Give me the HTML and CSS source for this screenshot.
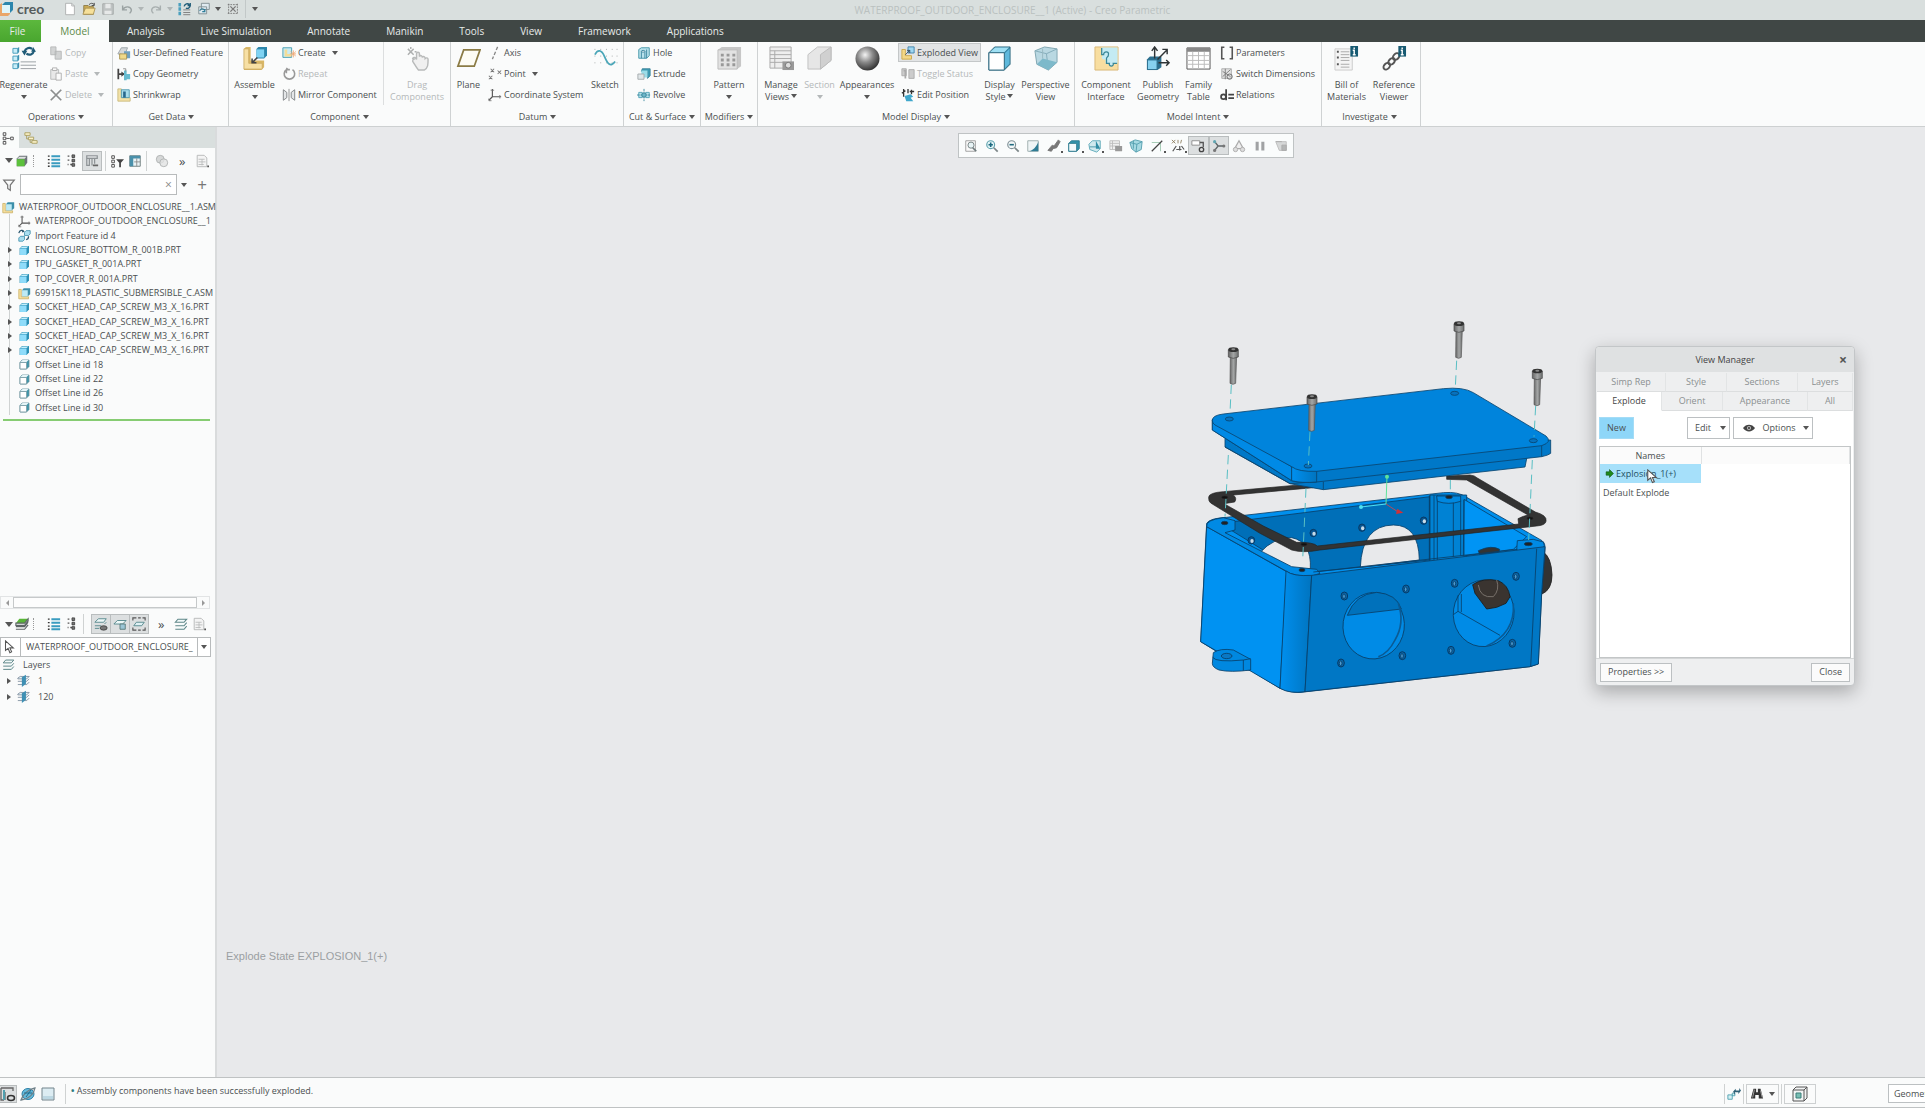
FILE: index.html
```html
<!DOCTYPE html>
<html lang="en">
<head>
<meta charset="utf-8">
<title>WATERPROOF_OUTDOOR_ENCLOSURE__1 (Active) - Creo Parametric</title>
<link rel="stylesheet" href="styles.css">
</head>
<body>
<svg class="sprite" aria-hidden="true">
  <defs>
    <radialGradient id="gSphere" cx=".4" cy=".35" r=".7"><stop offset="0" stop-color="#f4f4f4"/><stop offset=".45" stop-color="#8a8a8a"/><stop offset="1" stop-color="#2a2a2a"/></radialGradient>
  </defs>
  <symbol id="cube" viewBox="0 0 16 16"><path d="M2 5.500 5 2.500h8.500v8l-3 3H2z" fill="#2a8fb4"/><path d="M2.500 5.500h8v8h-8z" fill="#8fdcfa"/><path d="M3 5l2.500-2H13l-2.500 2z" fill="#c4effc"/></symbol>
  <symbol id="cubew" viewBox="0 0 16 16"><path d="M2.500 5.500l2.500-3h8.500v8l-3 3h-8z" fill="#3d97ac" stroke="#5f8f9b"/><path d="M2.500 5.500h8v8h-8z" fill="#fff" stroke="#7a9aa2"/><path d="M3 5l2.500-2.500H13L10.500 5z" fill="#e6f5f8"/></symbol>
  <symbol id="asm" viewBox="0 0 16 16"><path d="M1 3h3v9h9v2.500H1z" fill="#f6e0a0" stroke="#cbb064"/><path d="M5 4l2-2.500h8V9l-3 2.500H5z" fill="#3c8faa"/><path d="M5 4h7v7.500H5z" fill="#bdeaf5"/></symbol>
  <symbol id="csys" viewBox="0 0 16 16"><path d="M5 1v9h10M5 10l-4 4" fill="none" stroke="#555" stroke-width="1.300"/><path d="M3 2.500h4M13.500 8v4M1 12v2.500h3" stroke="#777" fill="none"/></symbol>
  <symbol id="imp" viewBox="0 0 16 16"><path d="M1 11l2-2h5v4l-2 2H1zM8 4l2-2h5v4l-2 2H8z" fill="#a9def0" stroke="#3d8fab"/><path d="M1 5c1-4 5-4 6-2l-2 .5M13 9c0 3-2 4-3 4" fill="none" stroke="#28546c" stroke-width="1.500"/></symbol>
  <symbol id="copy" viewBox="0 0 16 16"><path d="M2 1h6v9H2zM7 6h7v9H7z" fill="#d2d4d4" stroke="#b4b6b6"/></symbol>
  <symbol id="paste" viewBox="0 0 16 16"><path d="M2 3h9v11H2z" fill="#e8e8e8" stroke="#b4b6b6"/><path d="M4 1h5v3H4zM8 7h6v8H8z" fill="#fafafa" stroke="#aaa"/></symbol>
  <symbol id="del" viewBox="0 0 16 16"><path d="M2 2l12 12M14 2L2 14" stroke="#8c8e8e" stroke-width="2"/></symbol>
  <symbol id="udf" viewBox="0 0 16 16"><path d="M1 9l4-7h7l-3 8z" fill="#d4d8da" stroke="#98a0a4"/><path d="M8 6h7v8H8z" fill="#6fa0c0"/><path d="M3 9h8v6H3z" fill="#efd98a" stroke="#a89450"/></symbol>
  <symbol id="cgeo" viewBox="0 0 16 16"><path d="M1.500 2v12M1 8h7" stroke="#444" stroke-width="2"/><path d="M5 5l4 3-4 3z" fill="#444"/><path d="M8 4h3v4h4v6h-4v1H8z" fill="#67bcd0"/><path d="M7 2h3v3" fill="none" stroke="#888"/></symbol>
  <symbol id="shr" viewBox="0 0 16 16"><path d="M1 1h4v10h10v4H1z" fill="#f3e2a8" stroke="#c9b97a"/><path d="M5 2h9v9H5z" fill="#a8dcea" stroke="#4c98b0"/><path d="M7 4h3v7H7z" fill="#28688c"/></symbol>
  <symbol id="create" viewBox="0 0 16 16"><path d="M1 2h10v11H1z" fill="#c9ebf3" stroke="#3f9aae"/><path d="M3 4h3v5h5v3H3z" fill="#f2dd98"/><path d="M13 5v8M9 9h7M10 6l6 6M16 6l-6 6" stroke="#efaa78"/></symbol>
  <symbol id="repeat" viewBox="0 0 16 16"><path d="M5 3a6 6 0 1 0 7 0M5 3h4M5 3l1-2M5 3v4" fill="none" stroke="#999" stroke-width="1.800"/></symbol>
  <symbol id="mirror" viewBox="0 0 16 16"><path d="M1.500 2l4 3v6l-4 3zM14.500 2l-4 3v6l4 3z" fill="#e4e6e8" stroke="#7a7e80"/><path d="M8 1v14" stroke="#888"/></symbol>
  <symbol id="axis" viewBox="0 0 16 16"><path d="M11 1L5 15" stroke="#888" stroke-width="1.500" stroke-dasharray="4 2"/></symbol>
  <symbol id="point" viewBox="0 0 16 16"><path d="M3 2l4 4M7 2L3 6M11 4l4 4M15 4l-4 4M1 10l4 4M5 10l-4 4" stroke="#777" stroke-width="1.200"/></symbol>
  <symbol id="hole" viewBox="0 0 16 16"><path d="M2 4l3-2h9v9l-3 3H2z" fill="#b8e2ec" stroke="#3c91a6"/><path d="M5 6v8M9 6v8M11 4v10" stroke="#35809a"/><ellipse cx="7" cy="6" rx="2" ry="1" fill="#fff" stroke="#35809a"/></symbol>
  <symbol id="extr" viewBox="0 0 16 16"><path d="M6 2h9v8l-3 3V5H5z" fill="#3d9cb4" stroke="#3a8298"/><path d="M5 4h7v8H5z" fill="#9bdce8"/><path d="M1 8h7v6H1z" fill="#e0e6e8" stroke="#a2a8aa"/></symbol>
  <symbol id="rev" viewBox="0 0 16 16"><path d="M2 5h4v6H2zM10 5h4v6h-4z" fill="#b8e2ec" stroke="#4ba0b5"/><path d="M8 1v14M0 8h16" stroke="#37869a" stroke-dasharray="3 1"/><circle cx="8" cy="8" r="2.500" fill="#6fb7ca" stroke="#37869a"/></symbol>
  <symbol id="expl" viewBox="0 0 16 16"><path d="M1 4h4v7h7v4H1z" fill="#f4d888" stroke="#c9a648"/><path d="M8 1h7v7H8z" fill="#9fd8f2" stroke="#3b7fa8"/><path d="M5 10l5-5M7 5h3v3" stroke="#345" fill="none"/></symbol>
  <symbol id="togg" viewBox="0 0 16 16"><path d="M1 2h5v8H1zM9 3h6v10H9z" fill="#ccc" stroke="#aaa"/><path d="M3 4h2v9" fill="none" stroke="#aaa" stroke-width="2"/></symbol>
  <symbol id="edpos" viewBox="0 0 16 16"><path d="M1 6l4-3M3 1v9M8 1v5M12 2v5M10 4h5" stroke="#333" stroke-width="1.500"/><path d="M4 9l7-2 3 3-3 1 3 4H6z" fill="#3fa7cc"/></symbol>
  <symbol id="param" viewBox="0 0 16 16"><path d="M5 1.500H2v13h3M11 1.500h3v13h-3" fill="none" stroke="#555" stroke-width="1.800"/></symbol>
  <symbol id="swd" viewBox="0 0 16 16"><path d="M2 2h11v11H2z" fill="#e2e2e2" stroke="#aaa"/><path d="M3 5l9 6M3 11l9-8M6 2v12" stroke="#777"/><circle cx="11" cy="11" r="3" fill="none" stroke="#666"/></symbol>
  <symbol id="rel" viewBox="0 0 16 16"><circle cx="4" cy="10" r="2.800" fill="none" stroke="#444" stroke-width="2"/><path d="M7 1.500V14M9.500 7.500H16M9.500 11.500H16" stroke="#444" stroke-width="2"/></symbol>
  <!-- large ribbon icons -->
  <symbol id="Regen" viewBox="0 0 26 26"><path d="M2 2.500h5v5H2zM2 10.500h5v5H2zM2 18.500h5v5H2z" fill="#c7edf8" stroke="#4a9fbd"/><path d="M7 2l1.500-1v5L7 8M7 10l1.500-1v5L7 16M7 18l1.500-1v5L7 24" fill="#3b90b0"/><path d="M10 16.500h16M10 20h16M10 23.500h16" stroke="#9a9fa3"/><path d="M14 6c1-4 5-5 8-3M24 5c-1 4-5 5-8 3" fill="none" stroke="#205c78" stroke-width="2.200"/><path d="M11 5h6l-3 5zM21 6h5l-3-5z" fill="#205c78"/></symbol>
  <symbol id="Assem" viewBox="0 0 26 26"><path d="M2 3l2-2h5v14h14v7l-3 3H2z" fill="#d9b766"/><path d="M2 3h5v15h14v6H2z" fill="#f7e0a4" stroke="#c9a860" stroke-width=".8"/><path d="M15 3l2-2h9v9l-3 3h-8z" fill="#2c86ab"/><path d="M15 3.500h8V12h-8z" fill="#7fd3f3"/><path d="M11 17l5-5M10.500 13v4.500H15" fill="none" stroke="#444" stroke-width="1.600"/></symbol>
  <symbol id="Drag" viewBox="0 0 26 26"><path d="M3 3l6 6M9 3L3 9M6 1v2M12 6h-2" stroke="#aeb0b0" stroke-width="1.500"/><path d="M8 13c1-2 3-1 4 1V8c0-2 3-2 3 0v3c1-2 3-1 3 1 1-2 3-1 3 1 1-1 3-1 3 1 0 5 0 9-4 11h-6c-2-2-4-6-6-9 0-2 1-3 2-2z" fill="#f0f0f0" stroke="#b8baba" stroke-width="1.500"/></symbol>
  <symbol id="Plane" viewBox="0 0 26 26"><path d="M8 4h17l-6 17H2z" fill="#fdfcf4" stroke="#8b7b45" stroke-width="1.800"/></symbol>
  <symbol id="Sketch" viewBox="0 0 26 26"><path d="M2 3v21M8 3v21M14 3v21M20 3v21M25 3v21" stroke="#a8adad" stroke-dasharray="1 6"/><path d="M2 9c3-6 7-5 10 2s6 12 11 5" fill="none" stroke="#4aa6b8" stroke-width="1.800"/></symbol>
  <symbol id="Pattern" viewBox="0 0 26 26"><path d="M1 4l4-3h20v20l-4 3z" fill="#c7c7c7"/><path d="M1 4h20v20H1z" fill="#e2e2e2" stroke="#bbb"/><path d="M4 8h3v3H4zM10 8h3v3h-3zM16 8h3v3h-3zM4 13h3v3H4zM10 13h3v3h-3zM16 13h3v3h-3zM4 18h3v3H4zM10 18h3v3h-3zM16 18h3v3h-3z" fill="#999"/></symbol>
  <symbol id="Manage" viewBox="0 0 26 26"><path d="M1 1h22v22H1z" fill="#eee" stroke="#aaa"/><path d="M1 5h22M1 9h22M1 13h22M1 17h14M6 5v18" stroke="#aaa"/><path d="M14 16h12v9H14z" fill="#999"/><circle cx="20" cy="20" r="3" fill="#ddd" stroke="#777"/></symbol>
  <symbol id="Section" viewBox="0 0 26 26"><path d="M1 9L11 1h14v14L14 24H1z" fill="#e6e6e6" stroke="#c0c0c0"/><path d="M14 9v15L25 15V1z" fill="#d0d0d0" stroke="#bbb"/></symbol>
  <symbol id="Appear" viewBox="0 0 26 26"><circle cx="13" cy="13" r="12.500" fill="url(#gSphere)"/></symbol>
  <symbol id="Display" viewBox="0 0 26 26"><path d="M2 7l6-6h16v18l-6 6H2z" fill="#2f7f9c" stroke="#2f6a80"/><path d="M3 6.500L8.500 1.500H23l-5 5z" fill="#9fe0f4"/><path d="M18.500 7.500l5-5v16l-5 5z" fill="#5fb9dc"/><path d="M2 7h16v18H2z" fill="#fff" stroke="#2f6a80"/></symbol>
  <symbol id="Persp" viewBox="0 0 26 26"><path d="M2 5L12 1l13 2v14l-9 8L4 19z" fill="#b9d8e2" stroke="#7fa4b0"/><path d="M2 5l12 3 11-5M14 8l2 17" fill="none" stroke="#84adba"/><path d="M4 19l6-6 15 4-9 8z" fill="#7db9ca"/><path d="M10 13V3" stroke="#98b8c2"/></symbol>
  <symbol id="CompInt" viewBox="0 0 26 26"><path d="M1 1h24v24H1z" fill="#f8dea0" stroke="#d8b878"/><path d="M8 1.500h16.500V18h-5c1 4-5 4-4 0H12v-4c-5 1-5-5-1-5H8z" fill="#c4ebf3"/><path d="M8 2v7h2c0-4 6-4 5 0 0 3-2 2-2 4v5h3c-1 4 5 4 4 0h4" fill="none" stroke="#3a8796" stroke-width="1.300"/></symbol>
  <symbol id="PubGeo" viewBox="0 0 26 26"><path d="M1 14l3-3h12v11l-4 3H1z" fill="#2c6f8e"/><path d="M1.500 14.500h10v10h-10z" fill="#86d1ef" stroke="#2c6f8e"/><path d="M9 13V2M6 5l3-4 3 4M12 14L22 4M17 3.500h5v5M13 17.500h11M21 14.500l3 3-3 3" fill="none" stroke="#2f3436" stroke-width="1.500"/></symbol>
  <symbol id="Family" viewBox="0 0 26 26"><path d="M1 2h24v22H1z" fill="#fff" stroke="#555"/><path d="M1 2h24v4H1z" fill="#888"/><path d="M1 10h24M1 15h24M1 19h24M7 6v18M13 6v18M19 6v18" stroke="#bbb"/></symbol>
  <symbol id="Bill" viewBox="0 0 26 26"><path d="M1 3h18v22H1z" fill="#f4f4f4" stroke="#ccc"/><path d="M3 6h2M3 12h2M3 19h2" stroke="#555" stroke-width="2"/><path d="M7 6h9M7 9h9M7 12h9M7 15h9M7 19h9M7 22h9" stroke="#aaa"/><path d="M17 0h8v11h-8z" fill="#175a72"/><path d="M21 1.500v1.500M19.500 4.500H21V9M19.500 9h3" stroke="#fff" stroke-width="1.500" fill="none"/></symbol>
  <symbol id="RefV" viewBox="0 0 26 26"><g fill="none" stroke="#555" stroke-width="2"><ellipse cx="5" cy="21" rx="4" ry="2.800" transform="rotate(-45 5 21)"/><ellipse cx="10" cy="16" rx="4" ry="2.800" transform="rotate(-45 10 16)"/><ellipse cx="14.500" cy="11.500" rx="4" ry="2.800" transform="rotate(-45 14 11)"/></g><path d="M17 0h8v11h-8z" fill="#175a72"/><path d="M21 1.500v1.500M19.500 4.500H21V9M19.500 9h3" stroke="#fff" stroke-width="1.500" fill="none"/></symbol>
  <!-- quick access -->
  <symbol id="new" viewBox="0 0 16 16"><path d="M3 1.500h7l3 3v10H3z" fill="#fff" stroke="#a9adad"/><path d="M10 1.500v3h3" fill="none" stroke="#a9adad"/></symbol>
  <symbol id="open" viewBox="0 0 16 16"><path d="M2 4h5l1 1h5v9H2z" fill="#caa952" stroke="#8c7a48"/><path d="M1 14l3-7h11l-2 7z" fill="#f6e09a" stroke="#a99256"/><path d="M8 3c2-2 4-2 6 0M14 1v3h-3" fill="none" stroke="#444"/></symbol>
  <symbol id="save" viewBox="0 0 16 16"><path d="M2 2h12v12H2z" fill="#bfc3c3" stroke="#a3a7a7"/><path d="M5 2h6v5H5zM4 10h8v4H4z" fill="#e6e8e8"/></symbol>
  <symbol id="undo" viewBox="0 0 16 16"><path d="M3 4v5h5M3 9c3-5 9-4 10 0 0 2-1 3-2 4" fill="none" stroke="#9aa2a2" stroke-width="1.600"/></symbol>
  <symbol id="redo" viewBox="0 0 16 16"><path d="M13 4v5H8M13 9C10 4 4 5 3 9c0 2 1 3 2 4" fill="none" stroke="#a8afaf" stroke-width="1.600"/></symbol>
  <symbol id="regs" viewBox="0 0 16 16"><path d="M2 1v14" stroke="#4a9fbd" stroke-width="3" stroke-dasharray="4 1"/><path d="M6 9h8M6 12h8M6 14.500h8" stroke="#777"/><path d="M7 5c1-3 4-4 6-2M14 3c0 3-2 5-5 4M14 1v3h-3" fill="none" stroke="#205c78" stroke-width="1.600"/></symbol>
  <symbol id="wins" viewBox="0 0 16 16"><path d="M5 1.500h9v7H5zM2 5.500h9v8H2z" fill="#dfeaf0" stroke="#7d8b90"/><path d="M3 10c2-3 4-3 6 0M9 8v3H6" fill="none" stroke="#2f7d98" stroke-width="1.300"/></symbol>
  <symbol id="closew" viewBox="0 0 16 16"><path d="M2 3h12M2 13h12M3 2v12M13 2v12" stroke="#777" stroke-dasharray="2 1"/><path d="M5 5l6 6M11 5l-6 6" stroke="#777" stroke-width="1.500"/></symbol>
  <!-- trees -->
  <symbol id="tTree" viewBox="0 0 16 16"><path d="M2.500 2h3v3h-3zM2.500 7h3v3h-3zM2.500 12h3v3h-3zM11 7h3v3h-3z" fill="#fff" stroke="#444"/><path d="M6 8.500h4" stroke="#444"/></symbol>
  <symbol id="tFold" viewBox="0 0 16 16"><path d="M1 2h6v3H1zM5 7h6v3H5zM9 11h6v3H9z" fill="#fbf2c8" stroke="#a89c5c"/><path d="M3 5v4h2M7 10v3h2" fill="none" stroke="#a89c5c"/></symbol>
  <symbol id="gcube" viewBox="0 0 16 16"><path d="M2 5l3-3h9v8l-3 4H2z" fill="#6d7278"/><path d="M2 6h9v8H2z" fill="#5cc13c"/><path d="M2.500 5.500L5 3h8l-2 2.500z" fill="#dfe3e0"/></symbol>
  <symbol id="l1" viewBox="0 0 16 16"><path d="M1 2.500h2M1 6.500h2M1 10.500h2M1 14h2" stroke="#333" stroke-width="1.500"/><path d="M5 2.500h10M5 6.500h10M5 10.500h10M5 14h10" stroke="#3a9cc0" stroke-width="2.400"/></symbol>
  <symbol id="l2" viewBox="0 0 16 16"><path d="M3 2.500h2M3 7h2M6 12h2M3 12h1" stroke="#555" stroke-width="1.500"/><path d="M8 1h3v3H8zM8 6h3v3H8zM8 11h3v3H8z" fill="#777" stroke="#444"/></symbol>
  <symbol id="cols" viewBox="0 0 16 16"><path d="M2 2h12v3H2zM2 5v8h3V5M8 5v8M11 5v6" fill="none" stroke="#8e9396" stroke-width="1.400"/><path d="M9 13h6" stroke="#666" stroke-width="2"/></symbol>
  <symbol id="tfil" viewBox="0 0 16 16"><path d="M2 2h3v3H2zM2 7h3v3H2zM2 12h3v3H2z" fill="#fff" stroke="#444"/><path d="M7 6h9l-3.500 4v5h-2v-5z" fill="#444"/></symbol>
  <symbol id="tset" viewBox="0 0 16 16"><path d="M2 2h12v12H2z" fill="#e8f3f6" stroke="#677"/><path d="M2 2h12v3H2zM2 5h4v9H2z" fill="#4a90aa"/><path d="M10 5v9M7 9h7" stroke="#888"/></symbol>
  <symbol id="rings" viewBox="0 0 16 16"><circle cx="6" cy="6" r="4.500" fill="#d6d8d8" stroke="#aeb1b1"/><circle cx="10" cy="10" r="4.500" fill="#e2e4e4" fill-opacity=".8" stroke="#aeb1b1"/></symbol>
  <symbol id="sheet" viewBox="0 0 16 16"><path d="M2.500 1.500h8l3 3v10h-11z" fill="#f4f4f4" stroke="#b4b6b6"/><path d="M4 6h7M4 9h8M4 12h6M8 6v7" stroke="#b9bbbb"/><path d="M14 13h2v2h-2z" fill="#555"/></symbol>
  <symbol id="funnel" viewBox="0 0 16 16"><path d="M2 2.500h12L9.500 8v6l-3-2V8z" fill="none" stroke="#777" stroke-width="1.400"/></symbol>
  <symbol id="glay" viewBox="0 0 16 16"><path d="M1 7l4-5h10l-4 5z" fill="#58b536"/><path d="M1 7h10l4-5v2.500l-4 5H1zM1 11h10l4-5M1 14h10l4-5" fill="none" stroke="#5d6466" stroke-width="1.300"/></symbol>
  <symbol id="lay" viewBox="0 0 16 16"><path d="M1.500 6l3-3.500h10l-3 3.500zM1.500 10h10l3-3.500M1.500 14h10l3-3.500" fill="#f2fafa" stroke="#5d8688" stroke-width="1.200"/></symbol>
  <symbol id="layb" viewBox="0 0 16 16"><path d="M1 5l3-2h11l-3 3H1zM1 9h11l3-3M1 13h11l3-3" fill="#e5f3f6" stroke="#789"/><path d="M6 4l5-3v11l-5 4z" fill="#3f90b4"/></symbol>
  <symbol id="leye" viewBox="0 0 16 16"><path d="M1 6l4-4h9l-3 4zM1 10h7M1 13h5M12 8l2-2" fill="#eef8f8" stroke="#4f8488"/><ellipse cx="11" cy="12.500" rx="4" ry="2.500" fill="#777" stroke="#444"/></symbol>
  <symbol id="lcube" viewBox="0 0 16 16"><path d="M1 8l4-4h10l-4 4z" fill="#eef8f8" stroke="#4f8488"/><path d="M8 8h6v6H8z" fill="#9bc6d6" stroke="#577"/></symbol>
  <symbol id="lsel" viewBox="0 0 16 16"><path d="M1 4V1h4M7 1h3M12 1h3v3M1 12v3h4M7 15h3M12 15h3v-3" fill="none" stroke="#555" stroke-width="1.300"/><path d="M2 10l3-4h9l-3 4z" fill="#dff0f4" stroke="#4f8488"/></symbol>
  <symbol id="arrow" viewBox="0 0 16 16"><path d="M4 1v11l3-2.500 2 5 2-1-2-4.500h4z" fill="#fff" stroke="#555" stroke-width="1.200"/></symbol>
  <!-- graphics toolbar -->
  <symbol id="zfit" viewBox="0 0 16 16"><path d="M2 2h11v12H2z" fill="#fafafa" stroke="#999"/><circle cx="8" cy="7" r="3.500" fill="#e8f4f6" stroke="#6d7a7c"/><path d="M10 10l4 4" stroke="#6d7a7c" stroke-width="2"/></symbol>
  <symbol id="zin" viewBox="0 0 16 16"><circle cx="6.500" cy="6.500" r="4.500" fill="#e4f6f8" stroke="#5fa2ae" stroke-width="1.300"/><path d="M4 6.500h5M6.500 4v5" stroke="#1f6a80" stroke-width="1.800"/><path d="M10 10l4.500 4.500" stroke="#7c8688" stroke-width="2"/></symbol>
  <symbol id="zout" viewBox="0 0 16 16"><circle cx="6.500" cy="6.500" r="4.500" fill="#f2f6f6" stroke="#7f9096" stroke-width="1.300"/><path d="M4 6.500h5" stroke="#1f6a80" stroke-width="1.800"/><path d="M10 10l4.500 4.500" stroke="#7c8688" stroke-width="2"/></symbol>
  <symbol id="repaint" viewBox="0 0 16 16"><path d="M2 2h12v12H2z" fill="#eff5f6" stroke="#9aa"/><path d="M14 3v11H3c5-1 9-5 11-11z" fill="#2f7c94"/></symbol>
  <symbol id="brush" viewBox="0 0 16 16"><path d="M1 13l5-6 2 1 5-7 2 2-4 7-4 1-2 3z" fill="#777" stroke="#777"/></symbol>
  <symbol id="dsty" viewBox="0 0 16 16"><path d="M2 5l3-3h9v9l-3 3H2z" fill="#3494ac" stroke="#2d7a8e"/><path d="M2 5h9v9H2z" fill="#f5fbfc" stroke="#2d7a8e"/></symbol>
  <symbol id="orient" viewBox="0 0 16 16"><path d="M1 6l4-4h9v9l-4 4-8-3z" fill="#cfe9ee" stroke="#58a6b6"/><path d="M9 2l5 9H9z" fill="#2b8ba4"/><path d="M2 9h10" stroke="#3a8fa4"/></symbol>
  <symbol id="vman" viewBox="0 0 16 16"><path d="M1 2h11v10H1z" fill="#f0f0f0" stroke="#bbb"/><path d="M1 5h11M1 8h11M4 2v10" stroke="#bbb"/><path d="M7 8h8v6H7z" fill="#999"/></symbol>
  <symbol id="pgl" viewBox="0 0 16 16"><path d="M1 4l6-3 8 2-1 9-6 3-5-4z" fill="#a6d9e2" stroke="#4f9cac"/><path d="M1 4l8 2 6-3M9 6l-1 9M5 2l0 9" stroke="#4f9cac" fill="none"/></symbol>
  <symbol id="diag" viewBox="0 0 16 16"><path d="M2 4h10v10" fill="none" stroke="#9bc6ae"/><path d="M2 14L14 2" stroke="#444" stroke-width="1.500"/></symbol>
  <symbol id="datum" viewBox="0 0 16 16"><path d="M1 1l4 4M5 1L1 5M8 1v4M12 1l-1 4" stroke="#8a7a5a"/><path d="M2 14l4-6M6 12h6M10 8v5M12 8l3 4" stroke="#555" stroke-width="1.400"/></symbol>
  <symbol id="anno" viewBox="0 0 16 16"><path d="M1 2h9v5H1z" fill="#fff" stroke="#888"/><path d="M10 4h4v5" fill="none" stroke="#555" stroke-width="1.500"/><circle cx="12" cy="12" r="2.500" fill="#ddd" stroke="#444" stroke-width="1.500"/></symbol>
  <symbol id="spin" viewBox="0 0 16 16"><path d="M7 8l-4-5M7 8l-4 5M7 8h7" stroke="#5e6668" stroke-width="1.600"/><circle cx="3" cy="3" r="1.800" fill="#5fa4b0"/><circle cx="3" cy="13" r="1.800" fill="#777"/><circle cx="13.500" cy="8" r="1.800" fill="#777"/></symbol>
  <symbol id="simu" viewBox="0 0 16 16"><path d="M8 2l5 9H3z" fill="#eee" stroke="#aaa" stroke-width="1.400"/><circle cx="4" cy="12" r="2.500" fill="#ddd" stroke="#aaa"/><circle cx="12" cy="12" r="2.500" fill="#ddd" stroke="#aaa"/></symbol>
  <symbol id="pause" viewBox="0 0 16 16"><path d="M3 3h3.500v10H3zM9.500 3H13v10H9.500z" fill="#a0a2a4"/></symbol>
  <symbol id="stop" viewBox="0 0 16 16"><path d="M2 3h12v10H6z" fill="#d6d8d8" stroke="#bbb"/><path d="M2 3h7M9 7h5v6H9z" fill="#b4b6b6" stroke="#aaa"/></symbol>
  <!-- status bar -->
  <symbol id="sTree" viewBox="0 0 16 16"><path d="M1 2h12v3M1 2v12h3M5 6v8" fill="none" stroke="#666" stroke-width="1.300"/><path d="M4 4v10" stroke="#4f9fae" stroke-width="2"/><ellipse cx="11" cy="12" rx="3.500" ry="2.500" fill="none" stroke="#333" stroke-width="1.500"/></symbol>
  <symbol id="sWeb" viewBox="0 0 16 16"><ellipse cx="8" cy="8" rx="6" ry="5.500" fill="#65bbdc" stroke="#2d7fa5"/><path d="M1 14C3 8 9 3 15 2c-1 6-6 11-14 12z" fill="none" stroke="#6f8088" stroke-width="1.300"/><path d="M4 7h8M6 11l5-7" stroke="#1e6b8e"/></symbol>
  <symbol id="sWin" viewBox="0 0 16 16"><path d="M2 2h12v12H2z" fill="#dcecf2" stroke="#72848c"/><path d="M3 10h10v3H3z" fill="#bcd7e2"/></symbol>
  <symbol id="sReg" viewBox="0 0 16 16"><path d="M1 9h5v5H1zM6 7h3v3H6z" fill="#d4f0f4" stroke="#4a9fae"/><path d="M7 5l3-3v2h4V1l2 3-3 4V6H9v3z" fill="#2c6076"/></symbol>
  <symbol id="sFind" viewBox="0 0 16 16"><path d="M4 2h3v4h2V2h3l3 11h-5V9H6v4H1z" fill="#333"/><path d="M5 3L3 12M12 4l2 8" stroke="#aaa"/></symbol>
  <symbol id="sBox" viewBox="0 0 16 16"><path d="M1 4l3-3h11v11l-3 3H1z" fill="#f2f4f4" stroke="#555"/><path d="M1 4h11v11M12 4l3-3" fill="none" stroke="#555"/><path d="M4 7h5v5H4z" fill="#77bdb2" stroke="#3b7f78"/></symbol>
  <symbol id="eye" viewBox="0 0 16 16"><path d="M0 8c4-6 12-6 16 0-4 6-12 6-16 0z" fill="#444"/><circle cx="8" cy="8" r="2.800" fill="#bbb"/><circle cx="8" cy="8" r="1.300" fill="#333"/></symbol>
  <symbol id="go" viewBox="0 0 16 16"><path d="M2 5h6V1l7 7-7 7v-4H2z" fill="#1f8a1c" stroke="#0f4f10"/></symbol>
  <symbol id="logo" viewBox="0 0 16 16"><path d="M1 4l3-2v8h8v3l-2 2H1z" fill="#e9a66a"/><path d="M4 4l3-3h8v8l-3 3H4z" fill="#2c86ad"/><path d="M4 4h8v8H4z" fill="#dff5fb"/></symbol>
</svg>

<div class="app">
  <header class="title-bar">
    <div class="quick">
      <svg class="i16"><use href="#logo"/></svg><span class="brand">creo</span>
      <button aria-label="New"><svg class="i14"><use href="#new"/></svg></button>
      <button aria-label="Open"><svg class="i14"><use href="#open"/></svg></button>
      <button aria-label="Save"><svg class="i14"><use href="#save"/></svg></button>
      <button aria-label="Undo"><svg class="i14"><use href="#undo"/></svg><i class="dn pale"></i></button>
      <button aria-label="Redo"><svg class="i14"><use href="#redo"/></svg><i class="dn pale"></i></button>
      <button aria-label="Regenerate"><svg class="i14"><use href="#regs"/></svg></button>
      <button aria-label="Windows"><svg class="i14"><use href="#wins"/></svg><i class="dn"></i></button>
      <button aria-label="Close window"><svg class="i14"><use href="#closew"/></svg></button>
      <button class="more" aria-label="Customize toolbar"><i class="dn"></i></button>
    </div>
    <h1>WATERPROOF_OUTDOOR_ENCLOSURE__1 (Active) - Creo Parametric</h1>
  </header>

  <nav class="tabs">
    <button class="file">File</button><button class="on">Model</button><button>Analysis</button><button>Live Simulation</button><button>Annotate</button><button>Manikin</button><button>Tools</button><button>View</button><button>Framework</button><button>Applications</button>
  </nav>

  <div class="ribbon">
    <section class="group g-ops">
      <button class="big"><svg><use href="#Regen"/></svg>Regenerate<i class="dn"></i></button>
      <div class="stack">
        <button disabled><svg><use href="#copy"/></svg>Copy</button>
        <button disabled><svg><use href="#paste"/></svg>Paste<i class="dn"></i></button>
        <button disabled><svg><use href="#del"/></svg>Delete<i class="dn"></i></button>
      </div>
      <button class="name">Operations<i class="dn"></i></button>
    </section>
    <section class="group g-data">
      <div class="stack">
        <button><svg><use href="#udf"/></svg>User-Defined Feature</button>
        <button><svg><use href="#cgeo"/></svg>Copy Geometry</button>
        <button><svg><use href="#shr"/></svg>Shrinkwrap</button>
      </div>
      <button class="name">Get Data<i class="dn"></i></button>
    </section>
    <section class="group g-comp">
      <button class="big"><svg><use href="#Assem"/></svg>Assemble<i class="dn"></i></button>
      <div class="stack">
        <button><svg><use href="#create"/></svg>Create<i class="dn"></i></button>
        <button disabled><svg><use href="#repeat"/></svg>Repeat</button>
        <button><svg><use href="#mirror"/></svg>Mirror Component</button>
      </div>
      <button class="big split" disabled><svg><use href="#Drag"/></svg>Drag<br>Components</button>
      <button class="name">Component<i class="dn"></i></button>
    </section>
    <section class="group g-datum">
      <button class="big"><svg><use href="#Plane"/></svg>Plane</button>
      <div class="stack">
        <button><svg><use href="#axis"/></svg>Axis</button>
        <button><svg><use href="#point"/></svg>Point<i class="dn"></i></button>
        <button><svg><use href="#csys"/></svg>Coordinate System</button>
      </div>
      <button class="big"><svg><use href="#Sketch"/></svg>Sketch</button>
      <button class="name">Datum<i class="dn"></i></button>
    </section>
    <section class="group g-cut">
      <div class="stack">
        <button><svg><use href="#hole"/></svg>Hole</button>
        <button><svg><use href="#extr"/></svg>Extrude</button>
        <button><svg><use href="#rev"/></svg>Revolve</button>
      </div>
      <button class="name">Cut &amp; Surface<i class="dn"></i></button>
    </section>
    <section class="group g-mod">
      <button class="big"><svg><use href="#Pattern"/></svg>Pattern<i class="dn"></i></button>
      <button class="name">Modifiers<i class="dn"></i></button>
    </section>
    <section class="group g-disp">
      <button class="big"><svg><use href="#Manage"/></svg>Manage<span>Views<i class="dn"></i></span></button>
      <button class="big" disabled><svg><use href="#Section"/></svg>Section<i class="dn"></i></button>
      <button class="big"><svg><use href="#Appear"/></svg>Appearances<i class="dn"></i></button>
      <div class="stack">
        <button class="pressed"><svg><use href="#expl"/></svg>Exploded View</button>
        <button disabled><svg><use href="#togg"/></svg>Toggle Status</button>
        <button><svg><use href="#edpos"/></svg>Edit Position</button>
      </div>
      <button class="big"><svg><use href="#Display"/></svg>Display<span>Style<i class="dn"></i></span></button>
      <button class="big"><svg><use href="#Persp"/></svg>Perspective<br>View</button>
      <button class="name">Model Display<i class="dn"></i></button>
    </section>
    <section class="group g-intent">
      <button class="big"><svg><use href="#CompInt"/></svg>Component<br>Interface</button>
      <button class="big"><svg><use href="#PubGeo"/></svg>Publish<br>Geometry</button>
      <button class="big"><svg><use href="#Family"/></svg>Family<br>Table</button>
      <div class="stack">
        <button><svg><use href="#param"/></svg>Parameters</button>
        <button><svg><use href="#swd"/></svg>Switch Dimensions</button>
        <button><svg><use href="#rel"/></svg>Relations</button>
      </div>
      <button class="name">Model Intent<i class="dn"></i></button>
    </section>
    <section class="group g-inv">
      <button class="big"><svg><use href="#Bill"/></svg>Bill of<br>Materials</button>
      <button class="big"><svg><use href="#RefV"/></svg>Reference<br>Viewer</button>
      <button class="name">Investigate<i class="dn"></i></button>
    </section>
  </div>

  <main class="work">
    <aside class="side">
      <section class="pane">
        <div class="side-tabs">
          <button class="on" aria-label="Model tree"><svg class="i14"><use href="#tTree"/></svg></button>
          <button aria-label="Folder browser"><svg class="i14"><use href="#tFold"/></svg></button>
        </div>
        <div class="tools">
          <i class="dn big-dn"></i>
          <button aria-label="Model"><svg class="i14"><use href="#gcube"/></svg></button>
          <b class="grip"></b>
          <button aria-label="Expand"><svg class="i14"><use href="#l1"/></svg></button>
          <button aria-label="Collapse"><svg class="i14"><use href="#l2"/></svg></button>
          <button class="pressed" aria-label="Columns"><svg class="i14"><use href="#cols"/></svg></button>
          <b class="sep"></b>
          <button aria-label="Tree filters"><svg class="i14"><use href="#tfil"/></svg></button>
          <button aria-label="Tree columns"><svg class="i14"><use href="#tset"/></svg></button>
          <b class="sep"></b>
          <button class="spaced" aria-label="Groups"><svg class="i14"><use href="#rings"/></svg></button>
          <button class="chev">»</button>
          <button aria-label="Settings"><svg class="i14"><use href="#sheet"/></svg></button>
        </div>
        <div class="search">
          <svg class="i14"><use href="#funnel"/></svg>
          <div class="field"><input type="text" aria-label="Search tree"><button aria-label="Clear">×</button></div>
          <i class="dn"></i><button class="plus" aria-label="Add">+</button>
        </div>
        <ul class="tree">
          <li class="root"><svg><use href="#asm"/></svg>WATERPROOF_OUTDOOR_ENCLOSURE__1.ASM</li>
          <li><svg><use href="#csys"/></svg>WATERPROOF_OUTDOOR_ENCLOSURE__1</li>
          <li><svg><use href="#imp"/></svg>Import Feature id 4</li>
          <li class="kids"><svg><use href="#cube"/></svg>ENCLOSURE_BOTTOM_R_001B.PRT</li>
          <li class="kids"><svg><use href="#cube"/></svg>TPU_GASKET_R_001A.PRT</li>
          <li class="kids"><svg><use href="#cube"/></svg>TOP_COVER_R_001A.PRT</li>
          <li class="kids"><svg><use href="#asm"/></svg>69915K118_PLASTIC_SUBMERSIBLE_C.ASM</li>
          <li class="kids"><svg><use href="#cube"/></svg>SOCKET_HEAD_CAP_SCREW_M3_X_16.PRT</li>
          <li class="kids"><svg><use href="#cube"/></svg>SOCKET_HEAD_CAP_SCREW_M3_X_16.PRT</li>
          <li class="kids"><svg><use href="#cube"/></svg>SOCKET_HEAD_CAP_SCREW_M3_X_16.PRT</li>
          <li class="kids"><svg><use href="#cube"/></svg>SOCKET_HEAD_CAP_SCREW_M3_X_16.PRT</li>
          <li><svg><use href="#cubew"/></svg>Offset Line id 18</li>
          <li><svg><use href="#cubew"/></svg>Offset Line id 22</li>
          <li><svg><use href="#cubew"/></svg>Offset Line id 26</li>
          <li><svg><use href="#cubew"/></svg>Offset Line id 30</li>
        </ul>
        <div class="insert-line"></div>
        <div class="hscroll"><button aria-label="Scroll left"><i class="lt"></i></button><div class="thumb"></div><button aria-label="Scroll right"><i class="rt"></i></button></div>
      </section>
      <section class="pane">
        <div class="tools">
          <i class="dn big-dn"></i>
          <button aria-label="Layers"><svg class="i14"><use href="#glay"/></svg></button>
          <b class="grip"></b>
          <button aria-label="Expand"><svg class="i14"><use href="#l1"/></svg></button>
          <button aria-label="Collapse"><svg class="i14"><use href="#l2"/></svg></button>
          <b class="sep"></b>
          <div class="joined spaced">
            <button class="pressed" aria-label="Show layers"><svg class="i14"><use href="#leye"/></svg></button><button class="pressed" aria-label="Show items"><svg class="i14"><use href="#lcube"/></svg></button><button class="pressed" aria-label="Select layers"><svg class="i14"><use href="#lsel"/></svg></button>
          </div>
          <button class="chev">»</button>
          <button aria-label="Layer menu"><svg class="i14"><use href="#lay"/></svg></button>
          <button aria-label="Settings"><svg class="i14"><use href="#sheet"/></svg></button>
        </div>
        <div class="picker">
          <button aria-label="Select model"><svg class="i14"><use href="#arrow"/></svg></button>
          <select aria-label="Active model"><option>WATERPROOF_OUTDOOR_ENCLOSURE_</option></select>
          <i class="dn"></i>
        </div>
        <ul class="layers">
          <li class="root"><svg><use href="#lay"/></svg>Layers</li>
          <li class="kids"><svg><use href="#layb"/></svg>1</li>
          <li class="kids"><svg><use href="#layb"/></svg>120</li>
        </ul>
      </section>
    </aside>

    <section class="view">
      <div class="view-tools">
        <button aria-label="Refit"><svg><use href="#zfit"/></svg></button>
        <button aria-label="Zoom in"><svg><use href="#zin"/></svg></button>
        <button aria-label="Zoom out"><svg><use href="#zout"/></svg></button>
        <button aria-label="Repaint"><svg><use href="#repaint"/></svg></button>
        <button class="menu" aria-label="Rendering"><svg><use href="#brush"/></svg></button>
        <button class="menu" aria-label="Display style"><svg><use href="#dsty"/></svg></button>
        <button class="menu" aria-label="Saved orientations"><svg><use href="#orient"/></svg></button>
        <button aria-label="View manager"><svg><use href="#vman"/></svg></button>
        <button aria-label="Perspective"><svg><use href="#pgl"/></svg></button>
        <button class="menu" aria-label="Section display"><svg><use href="#diag"/></svg></button>
        <button class="menu" aria-label="Datum display"><svg><use href="#datum"/></svg></button>
        <button class="pressed" aria-label="Annotation display"><svg><use href="#anno"/></svg></button>
        <button class="pressed" aria-label="Spin center"><svg><use href="#spin"/></svg></button>
        <button aria-label="Simulate"><svg><use href="#simu"/></svg></button>
        <button aria-label="Pause"><svg><use href="#pause"/></svg></button>
        <button aria-label="Stop"><svg><use href="#stop"/></svg></button>
      </div>

      <svg class="model" viewBox="0 0 1170 1230" role="img" aria-label="Exploded enclosure assembly">
        <defs>
          <linearGradient id="corner"><stop offset="0" stop-color="#0090f0"/><stop offset="1" stop-color="#0074bf"/></linearGradient>
          <linearGradient id="shank"><stop offset="0" stop-color="#666"/><stop offset=".5" stop-color="#a4a6a6"/><stop offset="1" stop-color="#6d6f6f"/></linearGradient>
          <g id="screw"><path d="M-9 22h19l-3 84q-8 6-17 0z" fill="url(#shank)" stroke="#555" stroke-width="2"/><path d="M-15 5v22q14 8 30 0V5z" fill="url(#shank)" stroke="#444" stroke-width="2"/><ellipse cy="5" rx="15" ry="7" fill="#333"/><ellipse cy="4" rx="6" ry="3" fill="#888"/></g>
          <g id="bore"><ellipse rx="10" ry="12" fill="#0a66a8" stroke="#063a66" stroke-width="3"/><ellipse cx="-1" cy="1" rx="4" ry="7" fill="#4c9ad0"/></g>
          <g id="thru"><ellipse rx="10" ry="11" fill="#0a5590" stroke="#063a66" stroke-width="3"/><ellipse cx="2" cy="2" rx="5" ry="6" fill="#c9dbe8" stroke="none"/></g>
        </defs>
        <g transform="translate(0 510)" stroke="#093f68" stroke-width="2.500" stroke-linejoin="round">
          <path d="M1088 245q26 15 28 70 0 45-32 58z" fill="#333" stroke="#222"/>
          <path d="M80 160Q88 145 140 142L790 68Q835 64 860 82L1086 212Q1097 220 1095 240L1085 370 1075 582 1050 590 380 665Q340 673 300 655L210 600H200L62 515z" fill="#0090ee"/>
          <path d="M120 160L750 80V270L400 306 330 290z" fill="#006fb8"/>
          <path d="M750 75h110v190l-110 16z" fill="#0082d4"/>
          <path d="M852 88L1040 200 1000 238 850 258z" fill="#0094f4"/>
          <path d="M762 76v204M772 76v204M820 95v165M842 92v165M852 90v165M748 76v205" fill="none"/>
          <path d="M770 78h72v16q-36 12-70 0z" fill="#0088e0"/>
          <path d="M241 247Q280 203 335 203 395 215 391 296L322 300z" fill="#e8e9eb"/>
          <path d="M541 292Q546 166 640 165 716 165 718 270z" fill="#e8e9eb"/>
          <path d="M895 242q40-18 64-4l-2 8-58 8z" fill="#333"/>
          <use href="#thru" x="214" y="211"/><use href="#thru" x="400" y="189"/><use href="#thru" x="546" y="173"/><use href="#thru" x="731" y="152"/>
          <path d="M80 170L62 515 300 655 320 305z" fill="#0092f2"/>
          <path d="M80 170Q76 150 130 143L165 152V180L135 188 335 290 410 298 420 310 395 318Q340 320 318 303z" fill="#008ae4"/>
          <path d="M1012 212l48-4 30 8q6 10 0 20l-80 6z" fill="#008ae4"/>
          <path d="M318 303Q340 320 395 316L375 665Q330 672 300 655z" fill="url(#corner)"/>
          <path d="M395 316L1095 230 1085 370 1075 582 1050 590 375 665z" fill="#0077c5"/>
          <path d="M1070 236L1052 590M400 306L1012 238" fill="none"/>
          <path d="M100 548q20-14 60-8l52 28v32q-60 8-95 0-20-8-20-20z" fill="#0088e0"/>
          <path d="M98 562q10 16 92 8l22-4" fill="none"/><ellipse cx="140" cy="558" rx="16" ry="8" fill="#0a78c4"/><path d="M190 570v32"/>
          <ellipse cx="581" cy="467" rx="92" ry="100" fill="#008be6" transform="rotate(8 581 467)"/>
          <path d="M502 436Q525 372 590 367 650 372 664 417z" fill="#0071bb"/>
          <path d="M655 400q20 60-10 110-20 40-50 50" fill="none" stroke="#0a5a94" stroke-width="5"/>
          <ellipse cx="911" cy="430" rx="91" ry="100" fill="#008be6" transform="rotate(8 911 430)"/>
          <path d="M834 376v48l126 72M834 424l-14 10M844 372v54" fill="none"/>
          <path d="M878 344Q910 322 955 332 985 345 990 380L978 400 950 412 920 417 885 370z" fill="#3a3430" stroke="#1c1a18"/>
          <path d="M895 345q5 40 45 35 20-20 10-50" fill="none" stroke="#77706a" stroke-width="3"/>
          <path d="M1000 400q6 90-80 128" fill="none" stroke="#0a5a94" stroke-width="5"/>
          <use href="#bore" x="493" y="378"/><use href="#bore" x="678" y="357"/><use href="#bore" x="483" y="579"/><use href="#bore" x="667" y="557"/><use href="#bore" x="824" y="340"/><use href="#bore" x="1008" y="319"/><use href="#bore" x="813" y="541"/><use href="#bore" x="997" y="520"/>
          <ellipse cx="134" cy="159" rx="10" ry="5" fill="#222"/><ellipse cx="366" cy="300" rx="9" ry="5" fill="#222"/><ellipse cx="807" cy="81" rx="10" ry="5" fill="#222"/><ellipse cx="1045" cy="222" rx="12" ry="5" fill="#222"/>
        </g>
        <g fill="#333" stroke="#222" stroke-width="2" stroke-linejoin="round">
          <path d="M86 592Q86 578 130 575L400 551V563L160 585Q172 594 164 606L132 611 250 678 350 727Q400 726 412 738L1016 672 1014 656Q1030 648 1044 645L860 540 800 538V528L870 525Q884 526 892 534L1066 636Q1102 646 1098 664 1096 676 1070 678L420 750Q370 760 335 750L240 700 92 609Q85 604 86 592z"/>
          <ellipse cx="134" cy="592" rx="9" ry="4" fill="#111"/><ellipse cx="372" cy="733" rx="9" ry="4" fill="#111"/><ellipse cx="1050" cy="655" rx="9" ry="4" fill="#111"/>
        </g>
        <g stroke="#0a446f" stroke-width="2.500" stroke-linejoin="round">
          <path d="M135 415v26l195 110 100 18 605-68 6-30z" fill="#0078c8"/>
          <path d="M135 441l195 110 80-6M430 545v24" fill="none"/>
          <path d="M97 358L97 390 335 542Q350 548 410 546L1085 470Q1105 466 1112 460V420L600 440z" fill="#0078c8"/>
          <path d="M97 360V390L335 542V500z" fill="#008ae6"/>
          <path d="M335 500v42q30 8 75 4v-34z" fill="url(#corner)"/>
          <path d="M97 362Q96 346 130 342L790 266Q850 260 880 278L1098 408Q1118 426 1085 437L410 514Q355 516 335 500L105 375Q97 370 97 362z" fill="#0084dc"/>
          <path d="M1085 437v33" fill="none"/>
          <g fill="#0672be"><ellipse cx="148" cy="357" rx="12" ry="6"/><ellipse cx="824" cy="280" rx="12" ry="6"/><ellipse cx="1060" cy="422" rx="12" ry="6"/><ellipse cx="384" cy="498" rx="12" ry="6"/></g>
        </g>
        <g fill="none" stroke="#58bfc4" stroke-width="3" stroke-dasharray="28 16">
          <path d="M154 254L150 338M145 465L135 650M390 395L385 495M378 565L368 780M830 182L826 262M811 540V575M1067 318L1062 410M1057 480L1046 720"/>
        </g>
        <use href="#screw" x="160" y="144"/><use href="#screw" x="396" y="285"/><use href="#screw" x="837" y="66"/><use href="#screw" x="1072" y="208"/>
        <g stroke-width="3" fill="none"><path d="M621 530L618 612" stroke="#5fe39a"/><path d="M618 612L543 621" stroke="#4fe0f0"/><path d="M618 612L656 637" stroke="#b84a5a"/></g>
        <circle cx="621" cy="530" r="6" fill="#5fe39a"/><circle cx="543" cy="621" r="6" fill="#4fe0f0"/><path d="M648 642l4-16 18 12z" fill="#d03038"/>
      </svg>

      <p class="state">Explode State EXPLOSION_1(+)</p>

      <section class="dialog" role="dialog" aria-labelledby="vm">
        <header><h2 id="vm">View Manager</h2><button aria-label="Close dialog">×</button></header>
        <div class="dlg-tabs r1"><button>Simp Rep</button><button>Style</button><button>Sections</button><button>Layers</button></div>
        <div class="dlg-tabs r2"><button class="on">Explode</button><button>Orient</button><button>Appearance</button><button>All</button></div>
        <div class="dlg-body">
          <div class="dlg-actions">
            <button class="new">New</button>
            <button class="edit">Edit<i class="dn"></i></button>
            <button class="opts"><svg><use href="#eye"/></svg>Options<i class="dn"></i></button>
          </div>
          <div class="list">
            <table>
              <thead><tr><th>Names</th><th></th></tr></thead>
              <tbody>
                <tr class="sel"><td><svg><use href="#go"/></svg>Explosion_1(+)</td><td></td></tr>
                <tr><td>Default Explode</td><td></td></tr>
              </tbody>
            </table>
            <svg class="cursor" viewBox="0 0 16 16"><use href="#arrow"/></svg>
          </div>
        </div>
        <footer><button>Properties &gt;&gt;</button><button>Close</button></footer>
      </section>
    </section>
  </main>

  <footer class="status">
    <button class="pressed" aria-label="Toggle tree"><svg class="i16"><use href="#sTree"/></svg></button>
    <button aria-label="Toggle browser"><svg class="i16"><use href="#sWeb"/></svg></button>
    <button aria-label="Full screen"><svg class="i16"><use href="#sWin"/></svg></button>
    <b class="sep"></b>
    <p><b>•</b> Assembly components have been successfully exploded.</p>
    <div class="right">
      <b class="sep"></b>
      <button aria-label="Regeneration status"><svg class="i14"><use href="#sReg"/></svg></button>
      <b class="sep"></b>
      <button class="boxed find" aria-label="Find"><svg class="i14"><use href="#sFind"/></svg><i class="dn"></i></button>
      <b class="sep"></b>
      <button class="boxed sel3d" aria-label="3D selection"><svg class="i16"><use href="#sBox"/></svg></button>
      <div class="filter"><select aria-label="Selection filter"><option>Geometry</option></select></div>
    </div>
  </footer>
</div>
</body>
</html>
```
FILE: styles.css
```css
* { box-sizing: border-box; }
html, body { height: 100%; }
body { margin: 0; font: 9px/12px "Open Sans", "Noto Sans", sans-serif; color: #4a4f50; overflow: hidden; background: #fafbfb; }
button, input, select { font: inherit; color: inherit; border: 0; padding: 0; margin: 0; background: none; }
h1, h2, p, ul { margin: 0; padding: 0; font-weight: 400; }
ul { list-style: none; }
svg { flex: none; display: block; }
.sprite { position: absolute; width: 0; height: 0; }
.i14 { width: 14px; height: 14px; }
.i16 { width: 16px; height: 16px; }
.dn { display: inline-block; flex: none; border: 3px solid transparent; border-top: 4px solid #555; border-bottom: 0; }
.dn.pale { border-top-color: #b0b6b6; }
.sep { width: 1px; height: 20px; background: #cfd2d2; }

.app { height: 100vh; display: flex; flex-direction: column; }

/* title bar */
.title-bar { height: 20px; display: grid; grid-template-columns: 300px 1fr 200px; align-items: center; background: #d9dfde; }
.title-bar h1 { font-size: 10px; text-align: center; color: #bac1c0; white-space: nowrap; }
.quick { display: flex; align-items: center; gap: 5px; height: 18px; align-self: start; }
.quick button { display: flex; align-items: center; gap: 4px; height: 18px; }
.quick > svg { margin-left: -2px; }
.brand { font: 700 14px/16px Lato, sans-serif; color: #555c5c; width: 41px; margin-left: -2px; }
.quick .more { border-left: 1px solid #c2c8c8; padding-left: 6px; }

/* ribbon tabs */
.tabs { height: 22px; display: flex; background: #404745; }
.tabs button { font-size: 10px; color: #e8ebea; padding: 0 18px; }
.tabs .file { width: 41px; padding: 0 6px 0 0; background: linear-gradient(#5cb83d, #49a62f); }
.tabs .on { width: 68px; padding: 0; color: #5a8a48; background: #fafcfb; }

/* ribbon */
.ribbon { height: 85px; display: flex; background: #fafbfb; border-bottom: 1px solid #cdd0d1; }
.group { display: grid; grid-template-rows: 63px 21px; border-right: 1px solid #cfd2d3; flex: none; }
.g-ops { grid-template-columns: 47px 65px; width: 113px; }
.g-data { grid-template-columns: 1fr; width: 116px; padding-left: 2px; }
.g-comp { grid-template-columns: 51px 103px 67px; width: 222px; }
.g-datum { grid-template-columns: 35px 100px 38px; width: 173px; }
.g-cut { grid-template-columns: 1fr; width: 77px; }
.g-cut .stack { padding-left: 11px; }
.g-mod { grid-template-columns: 1fr; width: 57px; }
.g-disp { grid-template-columns: 46px 31px 64px 83px 35px 57px; width: 317px; }
.g-intent { grid-template-columns: 62px 42px 39px 103px; width: 247px; }
.g-inv { grid-template-columns: 49px 46px; width: 99px; }
.big { display: flex; flex-direction: column; align-items: center; line-height: 12px; padding-top: 4px; white-space: nowrap; min-width: 0; text-align: center; }
.big svg { width: 25px; height: 25px; margin-bottom: 8px; }
.big > .dn { margin-top: 4px; }
.big span .dn { margin: 0 0 2px 2px; }
.big.split { border-left: 1px solid #dcdedf; }
.stack { display: flex; flex-direction: column; align-items: flex-start; }
.stack button { height: 21px; display: flex; align-items: center; gap: 2px; padding: 0 2px; white-space: nowrap; }
.stack svg { width: 14px; height: 14px; }
.stack .dn { margin-left: 4px; }
.stack .pressed { height: 17px; margin: 2px 0; outline: 1px solid #c4c7c8; background: #e2e4e5; }
.ribbon button:disabled { color: #b4b8b9; }
.ribbon button:disabled .dn { border-top-color: #b4b8b9; }
.name { grid-column: 1 / -1; grid-row: 2; display: flex; justify-content: center; align-items: center; gap: 3px; white-space: nowrap; padding-top: 3px; }

/* work area */
.work { flex: 1; min-height: 0; display: grid; grid-template-columns: 217px 1fr; background: #e8e9eb; }
.side { display: grid; grid-template-rows: 51fr 49fr; border-right: 2px solid #d9dbdc; background: #fafbfb; min-height: 0; }
.pane { display: flex; flex-direction: column; min-height: 0; min-width: 0; }
.side-tabs { display: flex; height: 21px; background: #d9dfde; }
.side-tabs button { padding: 0 6px 0 2px; }
.side-tabs .on { width: 19px; padding: 0 1px; background: #fafcfb; }
.side-tabs button + button { padding-left: 5px; }
.tools { display: flex; align-items: center; height: 25px; flex: none; gap: 4px; padding: 0 5px; }
.big-dn { border-width: 4px; border-top-width: 5px; border-bottom-width: 0; margin-right: -2px; }
.grip { width: 2px; height: 12px; border-left: 1px dotted #999; margin-right: 8px; }
.pressed { background: #dcdfe0; outline: 1px solid #b9bdbe; }
.tools .pressed { padding: 2px; }
.joined { display: flex; gap: 1px; }
.spaced { margin-left: 4px; }
.chev { font-size: 13px; line-height: 14px; margin: 0 6px; }
.search { display: flex; align-items: center; gap: 4px; height: 23px; padding: 1px 6px 1px 2px; flex: none; }
.field { flex: 1; display: flex; border: 1px solid #b8bbbc; background: #fff; height: 21px; min-width: 0; }
.field input { flex: 1; min-width: 0; }
.field button { width: 15px; font-size: 12px; color: #888; }
.plus { font-size: 17px; width: 14px; color: #777; margin-left: 4px; }
.tree { display: grid; grid-auto-rows: 1fr; height: 215px; margin-top: 4px; padding-left: 9px; flex: none; }
.tree li, .layers li { position: relative; display: flex; align-items: center; gap: 4px; padding-left: 8px; white-space: nowrap; }
.tree li svg, .layers li svg { width: 13px; height: 13px; }
.tree .root, .layers .root { margin-left: -7px; padding-left: 0; }
.tree li:not(.root) { border-left: 1px solid #d0d3d3; }
.kids::before { content: ""; position: absolute; left: -2px; top: 50%; margin-top: -3px; border: 3px solid transparent; border-left: 4px solid #555; border-right: 0; }
.insert-line { height: 2px; background: #86cc72; margin: 4px 5px 0 3px; flex: none; }
.hscroll { display: flex; height: 13px; margin: auto 5px 3px 0; border: 1px solid #e2e4e5; }
.hscroll button { width: 12px; }
.thumb { flex: 1; border: 1px solid #c6c9ca; background: #fdfdfd; }
.lt, .rt { display: inline-block; border: 3px solid transparent; }
.lt { border-right-color: #999; border-left: 0; }
.rt { border-left-color: #999; border-right: 0; }
.picker { display: flex; align-items: center; height: 20px; margin-right: 4px; border: 1px solid #b8bbbc; background: #fff; flex: none; }
.picker button { width: 20px; height: 18px; padding-left: 1px; border-right: 1px solid #b8bbbc; }
.picker select { flex: 1; min-width: 0; height: 18px; padding-left: 5px; appearance: none; border-right: 1px solid #b8bbbc; }
.picker .dn { margin: 0 3px; }
.layers { padding-left: 9px; }
.layers li { height: 16px; gap: 8px; }

/* graphics area */
.view { position: relative; overflow: hidden; }
.view-tools { position: absolute; left: 741px; top: 6px; width: 336px; height: 25px; display: flex; align-items: center; padding: 0 2px; background: #fafcfc; border: 1px solid #bfc3c4; }
.view-tools button { flex: 1; height: 19px; display: flex; align-items: center; justify-content: center; position: relative; }
.view-tools svg { width: 14px; height: 14px; }
.view-tools .pressed { outline-offset: -1px; }
.menu::after { content: ""; position: absolute; right: 1px; bottom: 2px; border: 1px solid #555; }
.model { position: absolute; left: 963px; top: 173px; width: 390px; height: 410px; }
.state { position: absolute; left: 9px; bottom: 114px; font: 11px/14px "Liberation Sans", Arial, sans-serif; color: #9b9fa2; }

/* view manager */
.dialog { position: absolute; right: 70px; top: 219px; width: 260px; height: 340px; display: flex; flex-direction: column; background: #eeeff0; border: 1px solid #c3c6c8; border-radius: 4px; box-shadow: 0 6px 18px rgba(0, 0, 0, .28); }
.dialog header { height: 25px; display: grid; grid-template-columns: 14px 1fr 14px; align-items: center; padding: 0 4px; background: #dfe1e2; border-radius: 4px 4px 0 0; flex: none; }
.dialog h2 { grid-column: 2; font-size: 9px; text-align: center; color: #444; }
.dialog header button { font-size: 14px; line-height: 14px; font-weight: 700; color: #555; }
.dlg-tabs { display: grid; height: 19px; margin: 0 1px; color: #8b8f91; flex: none; }
.dlg-tabs.r1 { grid-template-columns: 69px 61px 71px 1fr; margin-top: 1px; }
.dlg-tabs.r2 { grid-template-columns: 65px 61px 85px 1fr; }
.dlg-tabs button { border-right: 1px solid #e2e4e5; border-bottom: 1px solid #dcdedf; }
.dlg-tabs .on { background: #fff; color: #444; border-bottom-color: #fff; }
.dlg-body { flex: 1; display: flex; flex-direction: column; background: #fff; margin: 0 1px; padding: 6px 2px 0; min-height: 0; }
.dlg-actions { display: flex; margin-bottom: 7px; }
.dlg-actions button { height: 22px; border: 1px solid #bcc0c2; display: flex; align-items: center; }
.dlg-actions .new { width: 35px; justify-content: center; background: #8ed6f8; border-color: #a4dcf6; }
.dlg-actions .edit { width: 43px; justify-content: space-between; padding: 0 3px 0 7px; margin-left: auto; }
.dlg-actions .opts { width: 80px; justify-content: space-between; padding: 0 3px 0 9px; margin: 0 38px 0 3px; }
.opts svg { width: 12px; height: 12px; }
.list { position: relative; flex: 1; border: 1px solid #c3c6c7; }
.list table { width: 100%; border-collapse: collapse; table-layout: fixed; }
.list th { height: 17px; padding: 0; font-weight: 400; border-right: 1px solid #e0e2e3; background: #fbfbfb; }
.list th:first-child { width: 101px; }
.list td { height: 19px; padding: 0 3px; white-space: nowrap; }
.list td svg { display: inline-block; width: 9px; height: 9px; margin: 0 2px -1px 2px; }
.sel td:first-child { background: #a6e0fa; color: #1f4f63; }
.cursor { position: absolute; left: 44px; top: 22px; width: 15px; height: 15px; }
.dialog footer { display: flex; justify-content: space-between; align-items: center; height: 27px; padding: 0 4px; border-top: 1px solid #d4d6d7; flex: none; }
.dialog footer button { height: 19px; padding: 0 7px; border: 1px solid #bcc0c2; background: #fbfbfb; }

/* status bar */
.status { height: 31px; display: flex; align-items: center; flex: none; border-top: 1px solid #bfc2c3; border-bottom: 1px solid #bfc2c3; background: #fafbfb; padding-top: 2px; }
.status button { display: flex; align-items: center; }
.status > button { margin-right: 4px; }
.status > .sep { margin: 0 5px; }
.status p { padding-bottom: 6px; white-space: nowrap; }
.status p b { color: #2c7c80; }
.right { margin-left: auto; display: flex; align-items: center; gap: 2px; }
.boxed { height: 20px; border: 1px solid #cdd0d1; justify-content: center; }
.find { width: 33px; gap: 5px; }
.sel3d { width: 32px; }
.filter { width: 37px; overflow: hidden; margin-left: 70px; }
.filter select { width: 100px; height: 19px; padding-left: 5px; appearance: none; border: 1px solid #bcc0c2; background: #fff; }
```
